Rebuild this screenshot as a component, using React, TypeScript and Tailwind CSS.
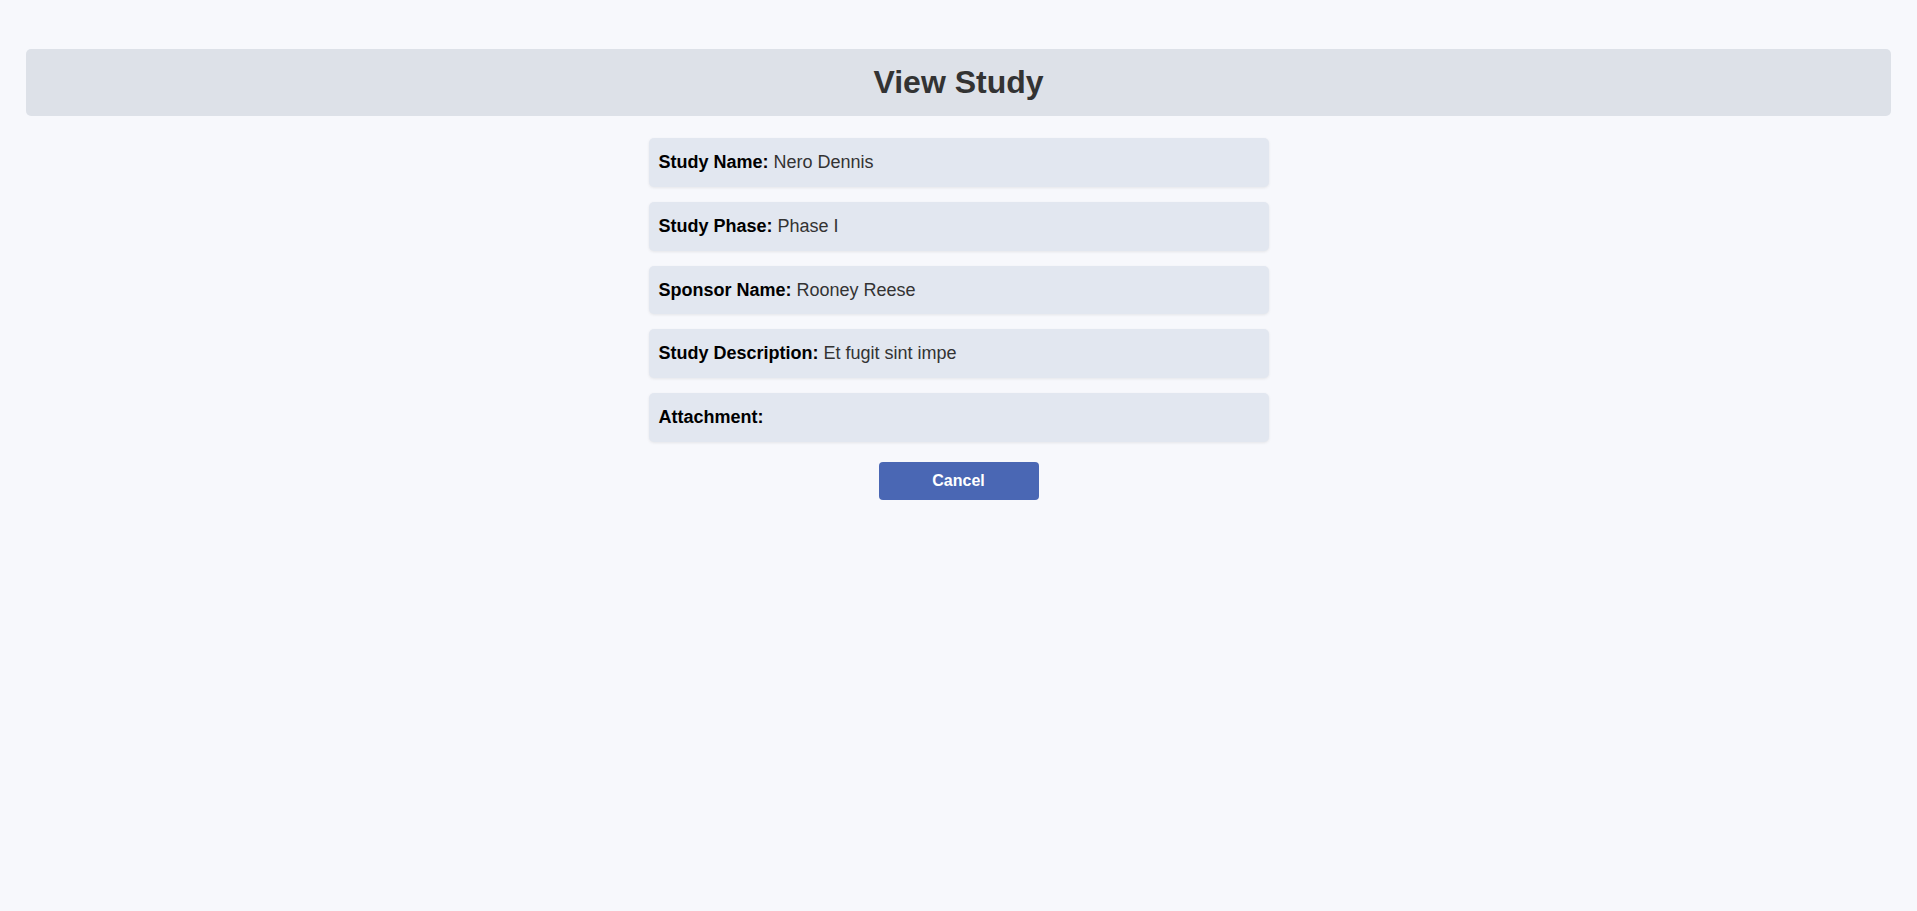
import React from "react";

const rows: { label: string; value: string }[] = [
  { label: "Study Name:", value: "Nero Dennis" },
  { label: "Study Phase:", value: "Phase I" },
  { label: "Sponsor Name:", value: "Rooney Reese" },
  { label: "Study Description:", value: "Et fugit sint impe" },
  { label: "Attachment:", value: "" },
];

export default function App() {
  return (
    <div
      className="min-h-[911px] w-full bg-[#f7f8fc] pt-[49px]"
      style={{ fontFamily: '"Liberation Sans", Arial, sans-serif' }}
    >
      <div className="mx-[26px] rounded-[5px] bg-[#dde1e8] py-[15px] text-center">
        <h1 className="text-[32px] font-bold leading-[37px] text-[#333333]">View Study</h1>
      </div>
      <div className="mx-auto mt-[22px] flex w-[620px] flex-col gap-[15px]">
        {rows.map((r) => (
          <div
            key={r.label}
            className="h-[48.8px] rounded-[5px] bg-[#e2e7f0] px-[10px] py-[10px] text-[18px] leading-[28.8px] shadow-[0_1px_3px_rgba(0,0,0,0.08)]"
          >
            <span className="font-bold text-black">{r.label}</span>
            {r.value ? <span className="text-[#333333]"> {r.value}</span> : null}
          </div>
        ))}
      </div>
      <div className="mt-[20px] flex justify-center">
        <button className="h-[38px] w-[160px] rounded-[4px] bg-[#4a67b4] text-[16px] font-bold text-white">
          Cancel
        </button>
      </div>
    </div>
  );
}
